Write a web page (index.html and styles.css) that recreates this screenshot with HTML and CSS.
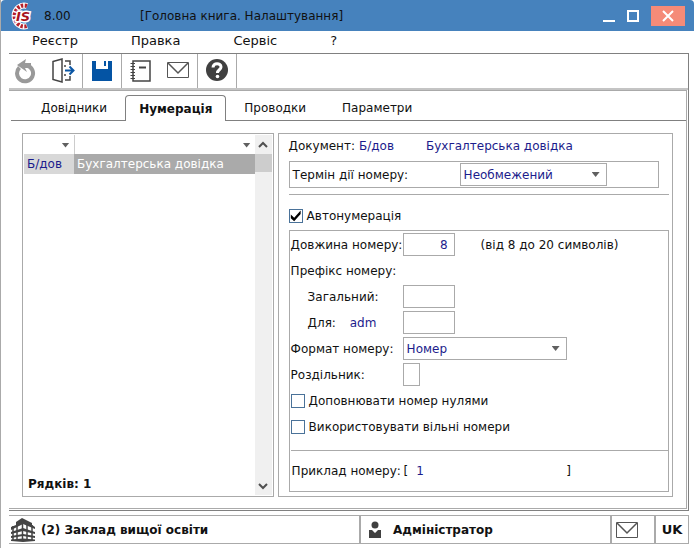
FILE: index.html
```html
<!DOCTYPE html>
<html lang="uk">
<head>
  <meta charset="UTF-8">
  <meta name="viewport" content="width=device-width, initial-scale=1">
  <title>Головна книга. Налаштування</title>
  <link rel="stylesheet" href="styles.css">
</head>
<body>
  <div class="window">
    <header class="titlebar">
      <svg class="logo" viewBox="0 0 26 28" role="img" aria-label="IS">
        <path d="M17 4A9.500 10.500 0 1 0 17 24" fill="none" stroke="#fff" stroke-width="6"/>
        <path d="M17 4A9.500 10.500 0 1 0 17 24" fill="none" stroke="#b5202b" stroke-width="4" stroke-dasharray="2.400 1.400"/>
        <text x="6" y="19" class="logo-text">IS</text>
      </svg>
      <span class="version">8.00</span>
      <span class="title">[Головна книга. Налаштування]</span>
      <div class="window-buttons">
        <button class="win-btn" aria-label="Згорнути"><svg width="12" height="14" viewBox="0 0 12 14"><path d="M0 12h12" stroke="#fff" stroke-width="2"/></svg></button>
        <button class="win-btn" aria-label="Розгорнути"><svg width="12" height="14" viewBox="0 0 12 14"><path d="M1 2h10v10H1z" fill="none" stroke="#fff" stroke-width="2"/></svg></button>
        <button class="win-btn close" aria-label="Закрити"><svg width="14" height="14" viewBox="0 0 14 14"><path d="M2 2l10 10M12 2L2 12" stroke="#fff" stroke-width="2"/></svg></button>
      </div>
    </header>

    <nav class="menu">
      <a href="#">Реєстр</a>
      <a href="#">Правка</a>
      <a href="#">Сервіс</a>
      <a href="#">?</a>
    </nav>

    <div class="frame">
      <div class="toolbar">
        <div class="tool-group">
          <button class="tool" aria-label="Оновити">
            <svg width="24" height="26" viewBox="0 0 24 26"><path d="M5.500 9.500A8 8 0 1 0 13 7.500" fill="none" stroke="#999" stroke-width="4"/><path d="M3 7l9-6-1 4h6v5h-6l2 4z" fill="#999"/></svg>
          </button>
          <button class="tool" aria-label="Вихід">
            <svg width="24" height="26" viewBox="0 0 24 26" fill="none" stroke="#444"><path d="M2 3.500L11 1v23L2 21.500z" stroke-width="1.500"/><path d="M14 3h5v4M14 22h5v-4M14 7v2M14 16v2" stroke-width="1.500"/><path d="M14 12.500h8M18.500 8.500l4 4-4 4" stroke="#0b56a4" stroke-width="2"/></svg>
          </button>
        </div>
        <div class="tool-group">
          <button class="tool" aria-label="Зберегти">
            <svg width="24" height="26" viewBox="0 0 24 26"><path d="M2 3h4v8h12V3h4v20H2z" fill="#0454a4"/><path d="M14 3h2v5h-2z" fill="#0454a4"/></svg>
          </button>
        </div>
        <div class="tool-group">
          <button class="tool" aria-label="Журнал">
            <svg width="24" height="26" viewBox="0 0 24 26" fill="none" stroke="#444"><path d="M4 3h17v20H4z" stroke-width="1.500"/><path d="M10 9.500h7" stroke-width="2"/><path d="M1.500 5.500H6M1.500 8.500H6M1.500 11.500H6M1.500 14.500H6M1.500 17.500H6M1.500 20.500H6"/></svg>
          </button>
          <button class="tool" aria-label="Повідомлення">
            <svg width="24" height="26" viewBox="0 0 24 26" fill="none" stroke="#555"><path d="M1.500 4.500h21v15h-21z"/><path d="M2 5l10 10L22 5" stroke-width="1.500"/></svg>
          </button>
        </div>
        <div class="tool-group">
          <button class="tool" aria-label="Довідка">
            <svg width="24" height="26" viewBox="0 0 24 26"><circle cx="12" cy="12" r="11" fill="#404040"/><path d="M8 9.500c0-5 8-5 8-.5 0 3-3.500 2.500-3.500 6" fill="none" stroke="#fff" stroke-width="3"/><circle cx="12.500" cy="18.500" r="1.800" fill="#fff"/></svg>
          </button>
        </div>
      </div>

      <main class="workspace">
        <div class="tabs" role="tablist">
          <button class="tab" role="tab">Довідники</button>
          <button class="tab active" role="tab" aria-selected="true">Нумерація</button>
          <button class="tab" role="tab">Проводки</button>
          <button class="tab" role="tab">Параметри</button>
          <span class="tabs-rest"></span>
        </div>

        <div class="columns">
          <section class="list">
            <div class="list-body">
              <table>
                <thead>
                  <tr>
                    <th class="code"><button class="filter" aria-label="Фільтр за кодом"></button></th>
                    <th><button class="filter" aria-label="Фільтр за назвою"></button></th>
                  </tr>
                </thead>
                <tbody>
                  <tr>
                    <td class="code">Б/дов</td>
                    <td class="name">Бухгалтерська довідка</td>
                  </tr>
                </tbody>
              </table>
              <p class="count">Рядків: 1</p>
            </div>
            <div class="scrollbar">
              <button aria-label="Вгору"><svg width="10" height="8" viewBox="0 0 10 8"><path d="M1 6l4-4 4 4" fill="none" stroke="#505050" stroke-width="2"/></svg></button>
              <div class="thumb"></div>
              <button class="down" aria-label="Вниз"><svg width="10" height="8" viewBox="0 0 10 8"><path d="M1 2l4 4 4-4" fill="none" stroke="#505050" stroke-width="2"/></svg></button>
            </div>
          </section>

          <form class="details">
            <p class="document">
              <span>Документ:</span>
              <span class="value">Б/дов</span>
              <span class="value doc-name">Бухгалтерська довідка</span>
            </p>
            <div class="term">
              <label for="term">Термін дії номеру:</label>
              <span class="select term-select"><select id="term"><option>Необмежений</option></select></span>
            </div>
            <hr>
            <label class="check auto"><input type="checkbox" checked> Автонумерація</label>

            <div class="numbering">
              <div class="row">
                <label class="caption" for="length">Довжина номеру:</label>
                <input class="field number" id="length" type="text" value="8">
                <span class="hint">(від 8 до 20 символів)</span>
              </div>
              <div class="row">Префікс номеру:</div>
              <div class="row">
                <label class="caption sub" for="prefix">Загальний:</label>
                <input class="field" id="prefix" type="text">
              </div>
              <div class="row">
                <label class="caption sub" for="prefix-user">Для: <span class="value user">adm</span></label>
                <input class="field" id="prefix-user" type="text">
              </div>
              <div class="row">
                <label class="caption" for="format">Формат номеру:</label>
                <span class="select format-select"><select id="format"><option>Номер</option></select></span>
              </div>
              <div class="row">
                <label class="caption" for="separator">Роздільник:</label>
                <input class="field short" id="separator" type="text">
              </div>
              <div class="row"><label class="check"><input type="checkbox"> Доповнювати номер нулями</label></div>
              <div class="row"><label class="check"><input type="checkbox"> Використовувати вільні номери</label></div>
              <div class="example">
                <span class="caption">Приклад номеру:</span>
                <span>[</span>
                <span class="value sample">1</span>
                <span>]</span>
              </div>
            </div>
          </form>
        </div>
      </main>
    </div>

    <footer class="status">
      <div class="cell org">
        <svg width="24" height="24" viewBox="0 0 24 24"><path d="M0 9l5-2V4l6-4 2 1 8 4v2l3 2v2l-12-5L0 12zM0 14l12-4 12 4v2l-12-3-12 3zM0 18l12-2 12 2v2l-12-2-12 2zM0 21.500l12-1 12 1v1.500l-12 1-12-1z" fill="#444"/><path d="M2 8v14M6 6v17M11.500 2v21M16 4v19M21 7v15" stroke="#444" stroke-width="1.500"/></svg>
        <span>(2) Заклад вищої освіти</span>
      </div>
      <div class="cell user-cell">
        <svg width="14" height="18" viewBox="0 0 14 18" fill="#404040"><circle cx="7" cy="4" r="3.500"/><path d="M1 9h3l3 3 3-3h3v8H1z"/></svg>
        <span>Адміністратор</span>
      </div>
      <button class="cell mail" aria-label="Пошта">
        <svg width="22" height="16" viewBox="0 0 22 16" fill="none" stroke="#555"><path d="M.5.5h21v15H.5z"/><path d="M1 1l10 10L21 1" stroke-width="1.500"/></svg>
      </button>
      <button class="cell lang">UK</button>
    </footer>
  </div>
</body>
</html>
```
FILE: styles.css
```css
:root {
  --blue: #4682bd;
  --value: #1c1c8c;
  --line: #aaaaaa;
  --dark-line: #808080;
}

* {
  box-sizing: border-box;
}

body {
  margin: 0;
  font-family: "DejaVu Sans", Verdana, sans-serif;
  font-size: 12px;
  color: #111;
  background: #fff;
}

button, input, select {
  font: inherit;
  color: inherit;
  margin: 0;
  border-radius: 0;
}

button {
  border: 0;
  padding: 0;
  background: none;
}

p {
  margin: 0;
}

svg {
  display: block;
}

.window {
  display: flex;
  flex-direction: column;
  min-height: 100vh;
  margin-right: 2px;
  padding-bottom: 4px;
  border-left: 1px solid var(--line);
}

.titlebar {
  display: flex;
  align-items: center;
  height: 31px;
  padding: 0 9px;
  background: var(--blue);
  border-radius: 4px 4px 0 0;
}

.logo {
  width: 26px;
  height: 28px;
}

.logo-text {
  font: italic bold 13px "DejaVu Sans", sans-serif;
  fill: #a8121e;
  stroke: #fff;
  stroke-width: 3px;
  paint-order: stroke;
}

.version {
  width: 96px;
  margin-left: 8px;
}

.window-buttons {
  display: flex;
  align-items: center;
  gap: 12px;
  margin-left: auto;
}

.win-btn {
  display: flex;
  align-items: center;
  justify-content: center;
  height: 20px;
}

.close {
  width: 34px;
  background: #f58b78;
}

.menu {
  display: flex;
  gap: 53px;
  height: 22px;
  padding-left: 31px;
  line-height: 20px;
  font-size: 13px;
}

.menu a {
  color: inherit;
  text-decoration: none;
}

.frame {
  flex: 1;
  display: flex;
  flex-direction: column;
  margin: 0 5px 0 8px;
  border: 1px solid var(--dark-line);
  border-left: 0;
}

.toolbar {
  display: flex;
  height: 36px;
  border-bottom: 2px solid #c4c4c4;
}

.tool-group {
  display: flex;
  align-items: center;
  gap: 13px;
  padding: 0 7px;
  border-right: 1px solid var(--line);
}

.tool-group:first-child {
  padding-left: 5px;
}

.workspace {
  flex: 1;
  display: flex;
  flex-direction: column;
  margin: 0 1px 1px 0;
  padding: 4px 0 11px 2px;
  border: 1px solid var(--line);
  border-left: 0;
}

.tabs {
  display: flex;
  height: 26px;
}

.tab {
  padding: 0 18px;
  border-bottom: 1px solid var(--dark-line);
}

.tab:first-child {
  padding-left: 30px;
}

.tab.active {
  padding: 0 13px;
  font-weight: bold;
  border: 1px solid var(--dark-line);
  border-bottom: 0;
  border-radius: 4px 4px 0 0;
}

.tabs-rest {
  flex: 1;
  border-bottom: 1px solid var(--dark-line);
}

.columns {
  flex: 1;
  display: grid;
  grid-template-columns: 252fr 396fr;
  gap: 4px;
  padding: 12px 13px 0 11px;
}

.list {
  display: flex;
  padding: 1px;
  border: 1px solid var(--line);
}

.list-body {
  flex: 1;
  display: flex;
  flex-direction: column;
}

table {
  width: 100%;
  border-collapse: collapse;
}

th {
  height: 19px;
  padding: 0 4px;
  line-height: 12px;
  text-align: right;
}

th.code {
  border-right: 1px solid #ccc;
}

.filter {
  width: 8px;
  height: 5px;
  vertical-align: middle;
  background: #606060;
  clip-path: polygon(0 0, 100% 0, 50% 100%);
}

td {
  height: 20px;
  padding: 0 3px;
}

td.code {
  width: 50px;
  color: var(--value);
  background: #d8d8d8;
}

td.name {
  color: #fff;
  background: var(--line);
}

.count {
  margin-top: auto;
  padding: 0 4px 4px;
  font-weight: bold;
}

.scrollbar {
  display: flex;
  flex-direction: column;
  width: 17px;
  background: #f0f0f0;
}

.scrollbar button {
  display: flex;
  align-items: center;
  justify-content: center;
  height: 19px;
}

.thumb {
  height: 18px;
  background: #cdcdcd;
}

.scrollbar .down {
  margin-top: auto;
}

.details {
  display: flex;
  flex-direction: column;
  padding: 0 3px 4px 10px;
  border: 1px solid var(--line);
}

.value {
  color: var(--value);
}

.document {
  display: flex;
  gap: 4px;
  height: 27px;
  line-height: 24px;
}

.doc-name {
  margin-left: 28px;
}

.term {
  display: flex;
  align-items: center;
  height: 27px;
  margin-right: 10px;
  padding-left: 3px;
  border: 1px solid var(--line);
}

.term label {
  width: 167px;
}

.select {
  position: relative;
  height: 23px;
}

.select::after {
  content: "";
  position: absolute;
  top: 9px;
  right: 7px;
  width: 8px;
  height: 5px;
  background: #606060;
  clip-path: polygon(0 0, 100% 0, 50% 100%);
  pointer-events: none;
}

select {
  appearance: none;
  width: 100%;
  height: 100%;
  padding: 0 3px;
  color: var(--value);
  background: #fff;
  border: 1px solid var(--line);
}

.term-select {
  width: 147px;
}

.format-select {
  width: 164px;
}

hr {
  width: 100%;
  margin: 6px 0 0;
  border: 0;
  border-top: 1px solid var(--line);
}

.check {
  display: flex;
  align-items: center;
  gap: 4px;
}

.auto {
  height: 35px;
  padding-top: 6px;
}

.check input {
  appearance: none;
  width: 14px;
  height: 14px;
  background: #fff;
  border: 1px solid #4a7299;
}

.check input:checked::before {
  content: "";
  display: block;
  width: 12px;
  height: 12px;
  background: #000;
  clip-path: polygon(10% 42%, 38% 68%, 92% 8%, 92% 38%, 38% 98%, 10% 72%);
}

.numbering {
  flex: 1;
  display: flex;
  flex-direction: column;
  gap: 3px;
  padding: 2px 0 0 1px;
  border: 1px solid var(--line);
}

.row {
  display: flex;
  align-items: center;
  height: 23px;
}

.caption {
  width: 112px;
}

.sub {
  padding-left: 17px;
}

.user {
  margin-left: 10px;
}

.field {
  width: 52px;
  height: 23px;
  padding: 0 6px;
  color: var(--value);
  background: #fff;
  border: 1px solid var(--line);
}

.number {
  text-align: right;
}

.short {
  width: 17px;
}

.hint {
  margin-left: 26px;
}

.example {
  flex: 1;
  display: flex;
  align-items: center;
  margin-top: 9px;
  padding-left: 1px;
  border-top: 1px solid var(--line);
}

.sample {
  width: 158px;
  padding-left: 8px;
}

.status {
  display: grid;
  grid-template-columns: 350fr 251fr 44px 34px;
  height: 29px;
  margin: 4px 5px 0 8px;
  border: 1px solid var(--line);
  border-left: 0;
  font-weight: bold;
}

.cell {
  display: flex;
  align-items: center;
  border-left: 2px solid var(--line);
}

.org {
  gap: 6px;
  padding-left: 2px;
  border-left: 0;
}

.user-cell {
  gap: 11px;
  padding-left: 7px;
}

.mail {
  padding-left: 4px;
}

.lang {
  justify-content: center;
  font-size: 13px;
}
```
